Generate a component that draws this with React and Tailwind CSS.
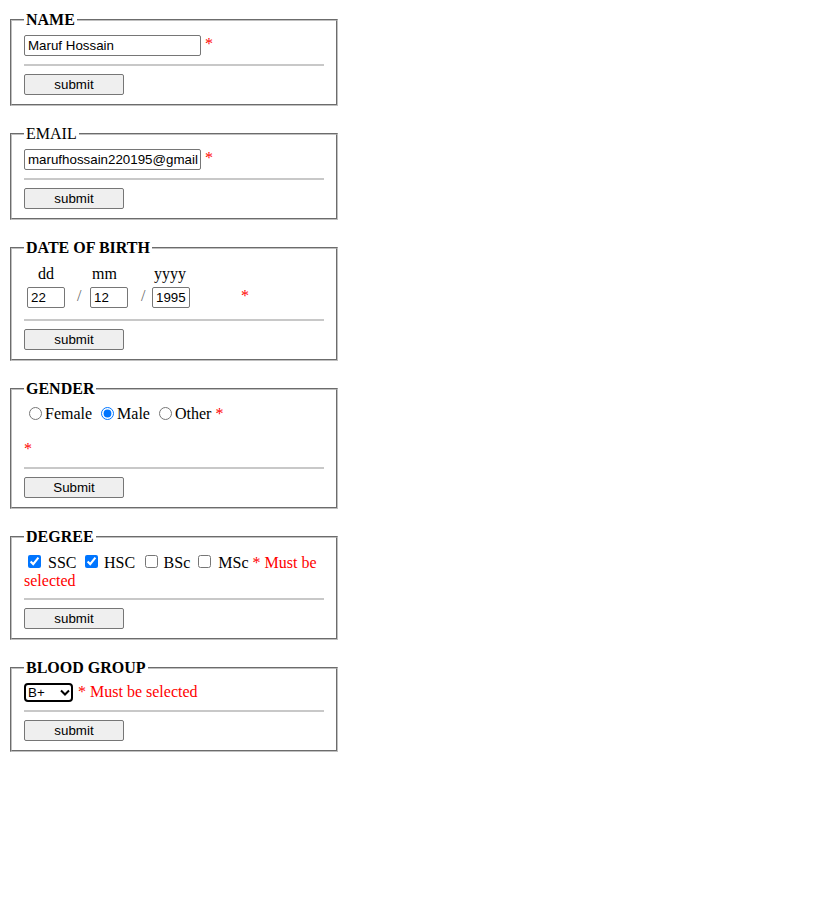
import { useState } from 'react';

const sans = "font-['Liberation_Sans',Arial,sans-serif] text-[13.33px] text-black";
const textInput = `h-[21px] border border-[#767676] rounded-[2px] bg-white pl-[3px] pr-[2px] outline-none ${sans}`;

function Star({ className = '' }) {
    return <span className={`leading-[18px] text-[red] ${className}`}>*</span>;
}

function Box({ title, bold = true, hrGap = 'mt-2', button = 'submit', children }) {
    return (
        <fieldset className="w-[328px] border-2 [border-style:groove] border-[#c0c0c0] px-3 pt-[6px] pb-[9px]">
            <legend className={`px-0.5 leading-[19px] ${bold ? 'font-bold' : ''}`}>{title}</legend>
            {children}
            <hr className={`${hrGap} h-[2px] border-0 bg-[#c8c8c8]`} />
            <button
                type="button"
                className={`mt-2 block w-[100px] h-[21px] rounded-[2px] border border-[#767676] bg-[#efefef] ${sans}`}
            >
                {button}
            </button>
        </fieldset>
    );
}

export default function App() {
    const [blood, setBlood] = useState('B+');

    return (
        <div className="min-h-[910px] bg-white text-black text-[16px] leading-[normal] font-['Liberation_Serif','Times_New_Roman',serif]">
            <div className="flex flex-col gap-[18px] pl-[10px] pt-[10px]">
                {/* name */}
                <Box title="NAME">
                    <div className="flex items-start">
                        <input type="text" defaultValue="Maruf Hossain" className={`w-[177px] ${textInput}`} />
                        <Star className="ml-1" />
                    </div>
                </Box>

                {/* email */}
                <Box title="EMAIL" bold={false}>
                    <div className="flex items-start">
                        <input type="text" defaultValue="marufhossain220195@gmail.com" className={`w-[177px] ${textInput}`} />
                        <Star className="ml-1" />
                    </div>
                </Box>

                {/* date of birth */}
                <Box title="DATE OF BIRTH" hrGap="mt-[11px]">
                    <div className="mt-[2px] flex leading-[18px]">
                        <span className="ml-[14px]">dd</span>
                        <span className="ml-[38px]">mm</span>
                        <span className="ml-[37px]">yyyy</span>
                    </div>
                    <div className="mt-1 flex items-start">
                        <div className="w-[41px]">
                            <input type="text" defaultValue="22" className={`ml-[3px] w-[38px] ${textInput}`} />
                        </div>
                        <span className="w-[25px] pl-[12px] leading-[18px] text-[#666]">/</span>
                        <input type="text" defaultValue="12" className={`w-[38px] ${textInput}`} />
                        <span className="w-[24px] pl-[13px] leading-[18px] text-[#666]">/</span>
                        <input type="text" defaultValue="1995" className={`w-[38px] ${textInput}`} />
                        <Star className="ml-[51px]" />
                    </div>
                </Box>

                {/* gender */}
                <Box title="GENDER" hrGap="mt-[9px]" button="Submit">
                    <div className="flex items-start">
                        <input type="radio" name="gender" className="mt-[3px] ml-[5px] mr-[3px] size-[13px]" />
                        <span className="mt-px leading-[18px]">Female</span>
                        <input type="radio" name="gender" defaultChecked className="mt-[3px] ml-[9px] mr-[3px] size-[13px]" />
                        <span className="mt-px leading-[18px]">Male</span>
                        <input type="radio" name="gender" className="mt-[3px] ml-[9px] mr-[3px] size-[13px]" />
                        <span className="mt-px leading-[18px]">Other</span>
                        <Star className="mt-px ml-1" />
                    </div>
                    <div className="mt-[17px] flex">
                        <Star />
                    </div>
                </Box>

                {/* degree */}
                <Box title="DEGREE">
                    <div className="flex items-start">
                        <input type="checkbox" defaultChecked className="mt-[3px] ml-1 size-[13px]" />
                        <span className="mt-[2px] ml-[7px] leading-[18px]">SSC</span>
                        <input type="checkbox" defaultChecked className="mt-[3px] ml-[8.5px] size-[13px]" />
                        <span className="mt-[2px] ml-[6px] leading-[18px]">HSC</span>
                        <input type="checkbox" className="mt-[3px] ml-[9.5px] size-[13px]" />
                        <span className="mt-[2px] ml-[6px] leading-[18px]">BSc</span>
                        <input type="checkbox" className="mt-[3px] ml-[8px] size-[13px]" />
                        <span className="mt-[2px] ml-[7px] leading-[18px]">MSc</span>
                        <span className="mt-[2px] ml-1 leading-[18px] text-[red]">* Must be</span>
                    </div>
                    <div className="leading-[18px] text-[red]">selected</div>
                </Box>

                {/* blood group */}
                <Box title="BLOOD GROUP">
                    <div className="flex items-start">
                        <div className="relative">
                            <select
                                value={blood}
                                onChange={(e) => setBlood(e.target.value)}
                                className={`block w-[49px] h-[19px] appearance-none rounded-[4px] border-2 border-black bg-white pl-[2px] leading-[15px] outline-none ${sans}`}
                            >
                                {['A+', 'A-', 'B+', 'B-', 'O+', 'O-', 'AB+', 'AB-'].map((g) => (
                                    <option key={g} value={g}>{g}</option>
                                ))}
                            </select>
                            <svg
                                className="pointer-events-none absolute left-[36px] top-[6px]"
                                width="10"
                                height="7"
                                viewBox="0 0 10 7"
                                fill="none"
                                stroke="black"
                                strokeWidth="2"
                            >
                                <path d="M1 1.5l4 4 4-4" />
                            </svg>
                        </div>
                        <span className="ml-[5px] leading-[18px] text-[red]">* Must be selected</span>
                    </div>
                </Box>
            </div>
        </div>
    );
}
